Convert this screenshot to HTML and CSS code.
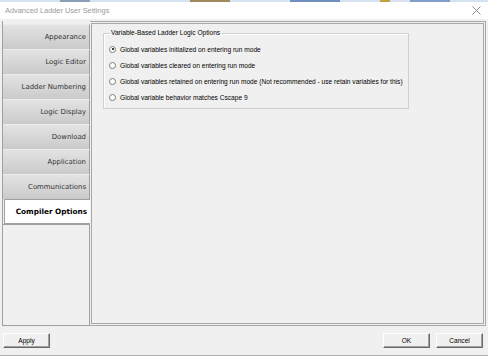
FILE: index.html
```html
<!DOCTYPE html>
<html>
<head>
<meta charset="utf-8">
<link rel="stylesheet" href="styles.css">
</head>
<body>
<div class="bgstrip"><span class="s1"></span><span class="s2"></span><span class="s3"></span><span class="s4"></span><span class="s5"></span></div>
<div class="window">
  <div class="titlebar">
    <span class="title">Advanced Ladder User Settings</span>
    <svg class="close" width="9" height="9" viewBox="0 0 9 9"><path d="M0.5 0.5 L8.5 8.5 M8.5 0.5 L0.5 8.5" stroke="#8a8a8a" stroke-width="1" fill="none"/></svg>
  </div>
  <div class="content">
    <div class="tabcol">
      <div class="tabs">
        <div class="tab">Appearance</div>
        <div class="tab">Logic Editor</div>
        <div class="tab">Ladder Numbering</div>
        <div class="tab">Logic Display</div>
        <div class="tab">Download</div>
        <div class="tab">Application</div>
        <div class="tab">Communications</div>
        <div class="tab active">Compiler Options</div>
      </div>
      <div class="filler"></div>
    </div>
    <div class="panel">
      <div class="panel-inner">
        <fieldset class="group">
          <legend>Variable-Based Ladder Logic Options</legend>
          <div class="opt"><span class="radio checked"></span><span>Global variables initialized on entering run mode</span></div>
          <div class="opt"><span class="radio"></span><span>Global variables cleared on entering run mode</span></div>
          <div class="opt"><span class="radio"></span><span>Global variables retained on entering run mode (Not recommended - use retain variables for this)</span></div>
          <div class="opt"><span class="radio"></span><span>Global variable behavior matches Cscape 9</span></div>
        </fieldset>
      </div>
    </div>
  </div>
  <div class="buttons">
    <div class="btn">Apply</div>
    <div class="spacer"></div>
    <div class="btn">OK</div>
    <div class="btn">Cancel</div>
  </div>
  <div class="bottomline"></div>
</div>
</body>
</html>
```
FILE: styles.css
```css
html, body {
  margin: 0;
  padding: 0;
  width: 488px;
  height: 356px;
  overflow: hidden;
  background: #f0f0f0;
  font-family: "Liberation Sans", Arial, sans-serif;
  font-size: 6.6px;
  color: #000;
}
.bgstrip {
  height: 2px;
  display: flex;
  background: #d6e2ef;
}
.bgstrip span { height: 2px; display: block; }
.bgstrip .s1 { width: 30px; margin-left: 60px; background: #8aa0b8; }
.bgstrip .s2 { width: 40px; margin-left: 100px; background: #a08a60; }
.bgstrip .s3 { width: 50px; margin-left: 60px; background: #6f8fc0; }
.bgstrip .s4 { width: 10px; margin-left: 40px; background: #c0a040; }
.bgstrip .s5 { width: 40px; margin-left: 20px; background: #7f9fc8; }
.window {
  height: 354px;
  display: flex;
  flex-direction: column;
}
.titlebar {
  height: 17px;
  background: #fff;
  display: flex;
  align-items: center;
  padding: 0 7px 0 5px;
}
.title {
  flex: 1;
  color: #999;
  font-family: "Liberation Sans", Arial, sans-serif;
  font-size: 7.4px;
}
.close { display: block; }
.content {
  display: flex;
  margin-top: 2px;
  padding: 0 2px 0 2px;
  height: 305px;
}
.tabcol {
  width: 87px;
  display: flex;
  flex-direction: column;
  border: 1px solid #a0a0a0;
  border-right: none;
  border-top: none;
}
.tabs {
  padding-top: 3px;
  display: flex;
  flex-direction: column;
}
.tab {
  height: 25px;
  box-sizing: border-box;
  display: flex;
  align-items: center;
  justify-content: flex-end;
  padding-right: 3px;
  font-family: "DejaVu Sans", Verdana, sans-serif;
  font-size: 6.9px;
  color: #333;
  background: linear-gradient(#e3e3e3, #cacaca);
  border-top: 1px solid #ececec;
  border-right: 1px solid #a0a0a0;
}
.tab.active {
  background: #fff;
  color: #000;
  font-weight: bold;
  font-size: 7.3px;
  border: 1px solid #a0a0a0;
  border-right: none;
  margin-left: 1px;
}
.filler {
  flex: 1;
  border-top: 1px solid #a0a0a0;
  border-right: 1px solid #a0a0a0;
  background: #f0f0f0;
}
.panel {
  flex: 1;
  border: 1px solid #a8a8a8;
  border-left: none;
  padding: 1px;
  background: #f0f0f0;
}
.panel-inner {
  height: 100%;
  box-sizing: border-box;
  border: 1px solid #a8a8a8;
  padding: 5px 0 0 11px;
}
.group {
  margin: 0;
  width: 306px;
  height: 80px;
  box-sizing: border-box;
  border: 1px solid #d0d0d0;
  box-shadow: inset 1px 1px 0 #fff;
  padding: 4px 0 0 5px;
}
.group legend {
  padding: 0 1px;
  margin-left: 1px;
  font-size: 6.6px;
  line-height: 8px;
}
.opt {
  height: 16px;
  display: flex;
  align-items: center;
  gap: 4px;
}
.radio {
  width: 5px;
  height: 5px;
  border-radius: 50%;
  border: 1px solid #7a7a7a;
  background: #fff;
  position: relative;
  flex: none;
}
.radio.checked::after {
  content: "";
  position: absolute;
  left: 1.5px;
  top: 1.5px;
  width: 2px;
  height: 2px;
  border-radius: 50%;
  background: #000;
}
.buttons {
  display: flex;
  align-items: center;
  padding: 7px 5px 0 3px;
  gap: 6px;
}
.spacer { flex: 1; }
.btn {
  width: 47px;
  height: 15px;
  box-sizing: border-box;
  display: flex;
  align-items: center;
  justify-content: center;
  background: #f0f0f0;
  border: 1px solid;
  border-color: #fff #696969 #696969 #fff;
  box-shadow: inset -1px -1px 0 #a0a0a0;
  font-size: 6.6px;
}
.bottomline {
  margin-top: auto;
  height: 1px;
  background: #b0b0b0;
}
```
